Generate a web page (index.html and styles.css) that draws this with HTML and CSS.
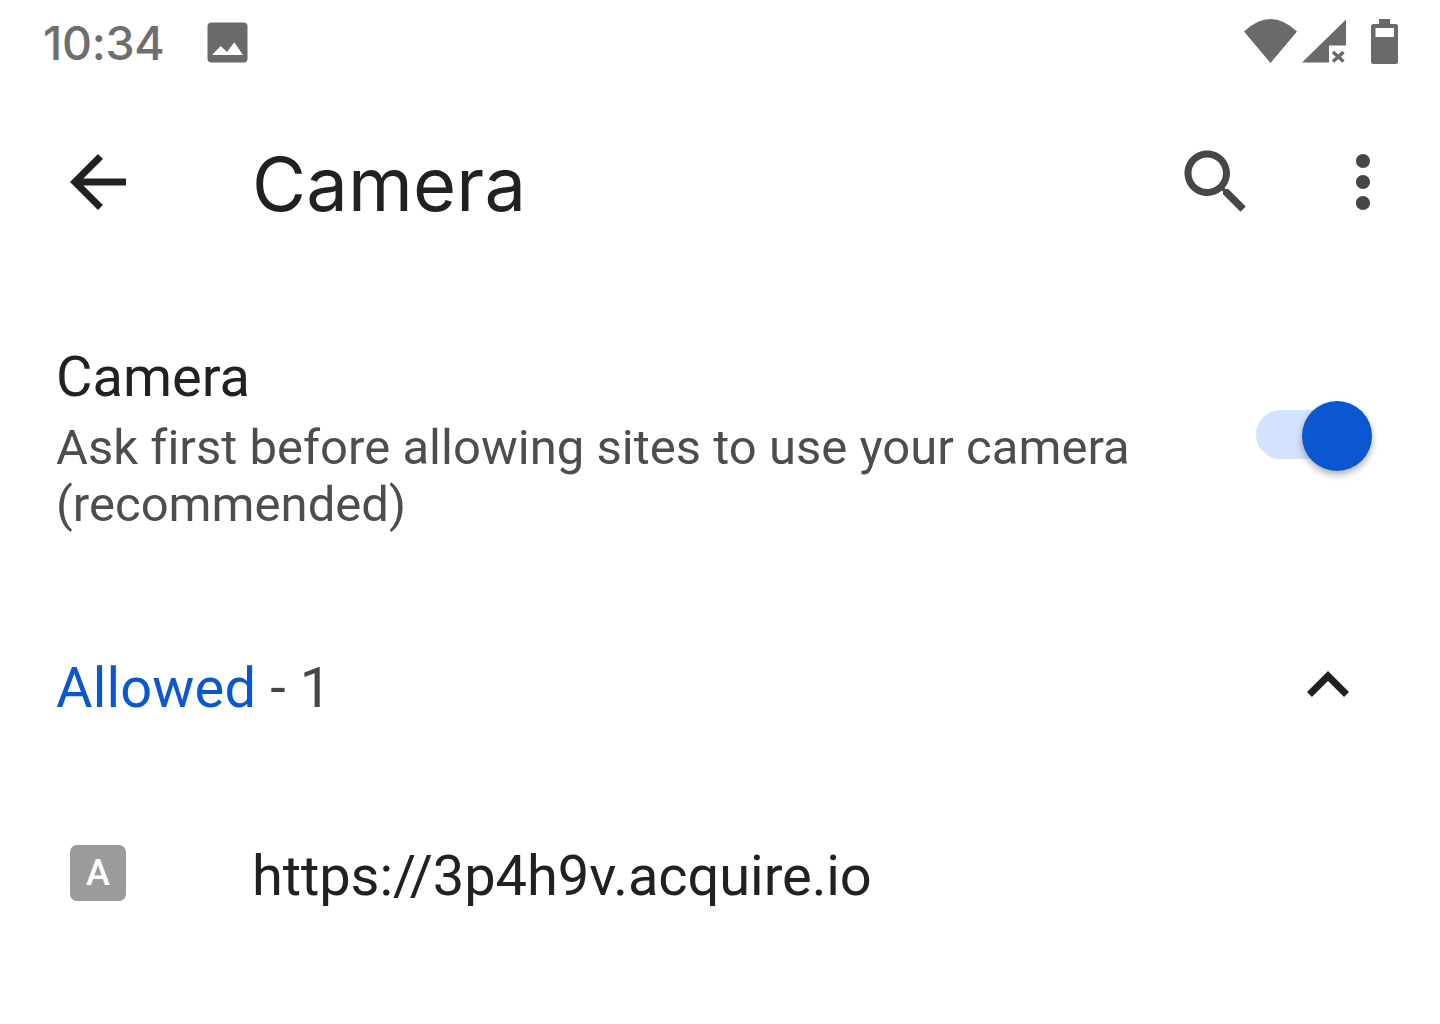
FILE: index.html
```html
<!DOCTYPE html>
<html lang="en">
<head>
<meta charset="utf-8">
<title>Camera</title>
<link rel="stylesheet" href="styles.css">
</head>
<body>
<div class="screen">
  <header class="status">
    <div class="status-left">
      <span class="time">10:34</span>
      <svg class="ic-image" width="41" height="41" viewBox="0 0 41 41"><rect x="0.5" y="0.5" width="40" height="40" rx="4" fill="#6a6a6a"/><path d="M5 33 13.7 24 20 30 27.3 20.3 36 33Z" fill="#fff"/></svg>
    </div>
    <div class="status-right">
      <svg class="ic-wifi" width="53" height="44" viewBox="0 0 53 44"><path d="M0 12.5Q26.5-12.5 53 12.5L26.5 44Z" fill="#6a6a6a"/></svg>
      <svg class="ic-signal" width="44" height="44" viewBox="0 0 44 44"><path d="M0 43.500 44 .5V26.500H27V43.500Z" fill="#6a6a6a"/><path d="M31 33 41.500 42.500M41.500 33 31 42.500" stroke="#6a6a6a" stroke-width="3.500" fill="none"/></svg>
      <svg class="ic-battery" width="27" height="45" viewBox="0 0 27 45"><path d="M8 0H19V5H24.500Q27 5 27 7.500V42.500Q27 45 24.500 45H2.500Q0 45 0 42.500V7.500Q0 5 2.500 5H8Z" fill="#6a6a6a"/><rect x="4.500" y="9" width="18.500" height="9" fill="#fff"/></svg>
    </div>
  </header>

  <nav class="toolbar">
    <svg class="tb-icon tb-back" viewBox="0 0 24 24"><path d="M20 11H7.830l5.590-5.590L12 4l-8 8 8 8 1.410-1.410L7.830 13H20v-2z" fill="#212121"/></svg>
    <h1 class="title">Camera</h1>
    <svg class="tb-icon tb-search" viewBox="0 0 24 24"><path d="M15.500 14h-.790l-.280-.270C15.410 12.590 16 11.110 16 9.500 16 5.910 13.090 3 9.500 3S3 5.910 3 9.500 5.910 16 9.500 16c1.610 0 3.090-.590 4.230-1.570l.270.280v.790l5 4.990L20.490 19l-4.990-5zm-6 0C7.010 14 5 11.990 5 9.500S7.010 5 9.500 5 14 7.010 14 9.500 11.990 14 9.500 14z" fill="#444746"/></svg>
    <svg class="tb-icon tb-more" viewBox="0 0 24 24"><path d="M12 8c1.100 0 2-.9 2-2s-.9-2-2-2-2 .9-2 2 .9 2 2 2zm0 2c-1.100 0-2 .9-2 2s.9 2 2 2 2-.9 2-2-.9-2-2-2zm0 6c-1.100 0-2 .9-2 2s.9 2 2 2 2-.9 2-2-.9-2-2-2z" fill="#444746"/></svg>
  </nav>

  <section class="setting">
    <div class="setting-text">
      <div class="setting-title">Camera</div>
      <div class="setting-desc">Ask first before allowing sites to use your camera (recommended)</div>
    </div>
    <div class="switch"><span class="switch-thumb"></span></div>
  </section>

  <section class="group">
    <div class="group-label"><span class="group-name">Allowed</span> - 1</div>
    <svg class="chevron" width="84" height="84" viewBox="0 0 24 24"><path d="M12 8l-6 6 1.410 1.410L12 10.830l4.590 4.580L18 14z" fill="#212121"/></svg>
  </section>

  <section class="site">
    <span class="favicon">A</span>
    <span class="site-url">https://3p4h9v.acquire.io</span>
  </section>
</div>
</body>
</html>
```
FILE: styles.css
```css
* { box-sizing: border-box; }
html, body { margin: 0; padding: 0; background: #fff; }
.screen { width: 1440px; height: 1024px; overflow: hidden; font-family: Roboto, "Liberation Sans", sans-serif; color: #212121; }

.status { height: 84px; padding: 19px 42px 0 43px; display: flex; justify-content: space-between; align-items: flex-start; }
.status-left { display: flex; align-items: flex-start; }
.time { font-family: Inter, Roboto, sans-serif; font-size: 46.500px; font-weight: 500; line-height: 48px; letter-spacing: -.3px; color: #6e6e6e; width: 164px; }
.ic-image { margin-top: 3px; }
.status-right { display: flex; align-items: flex-start; }
.ic-signal { margin-left: 5px; }
.ic-battery { margin-left: 25px; }

.toolbar { height: 196px; padding-left: 56px; display: flex; align-items: center; }
.tb-icon { width: 84px; height: 84px; flex: none; }
.title { margin: 3px 0 0 112px; flex: 1; font-family: Inter, Roboto, sans-serif; font-weight: 400; font-size: 74px; line-height: 84px; letter-spacing: .2px; color: #212121; }
.tb-more { margin-left: 63px; margin-right: 35px; }

.setting { height: 300px; padding: 64px 68px 0 56px; display: flex; justify-content: space-between; align-items: flex-start; }
.setting-text { width: 1100px; }
.setting-title { font-size: 56px; line-height: 66px; }
.setting-desc { margin-top: 9px; font-size: 49px; line-height: 57px; letter-spacing: .02px; color: #4d4d4d; }
.switch { position: relative; width: 116px; height: 49px; margin-top: 66px; }
.switch::before { content: ""; display: block; width: 98px; height: 49px; border-radius: 25px; background: #d3e3fd; }
.switch-thumb { position: absolute; right: 0; top: -9px; width: 70px; height: 70px; border-radius: 50%; background: #0b57d0; box-shadow: 0 4px 7px rgba(0,0,0,.3); }

.group { height: 212px; padding: 4px 70px 0 56px; display: flex; justify-content: space-between; align-items: center; }
.group-label { font-size: 56px; line-height: 66px; letter-spacing: .15px; color: #444746; }
.group-name { color: #0b57d0; }
.chevron { margin-bottom: 6px; }

.site { height: 232px; padding: 0 0 64px 70px; display: flex; align-items: center; }
.favicon { width: 56px; height: 56px; margin-bottom: 6px; border-radius: 7px; background: #9b9b9b; color: #fff; font-size: 36px; font-weight: 500; display: flex; align-items: center; justify-content: center; }
.site-url { margin-left: 126px; font-size: 56px; line-height: 66px; letter-spacing: -.08px; color: #212121; }
```
